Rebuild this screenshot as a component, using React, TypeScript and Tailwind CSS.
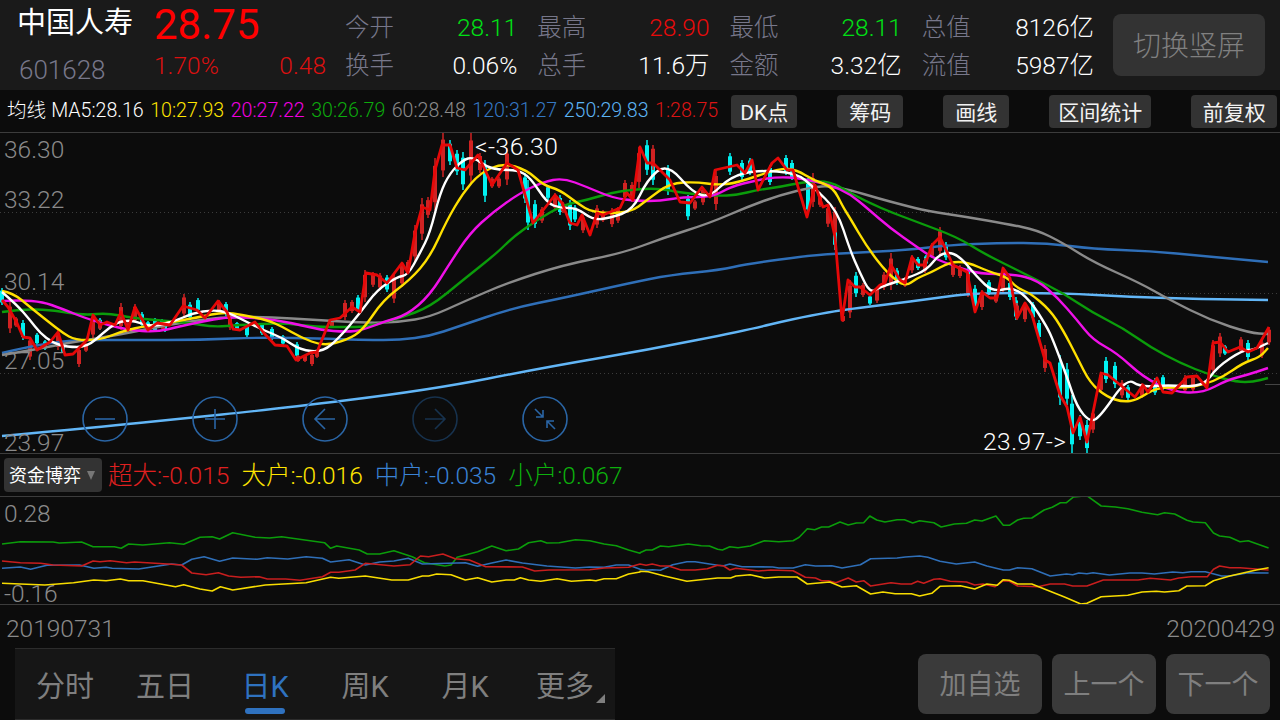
const ma5 = "2,292 17,305 30,320 40,333 53,343 67,347 87,347 103,333 117,322 133,320 150,327 173,322 193,313 213,310 227,312 243,320 263,330 283,338 300,350 323,352 340,337 360,313 377,290 397,277 408,275 420,253 430,233 440,193 450,173 463,160 473,157 487,167 500,170 517,170 530,177 547,203 560,208 577,208 593,220 610,218 633,210 647,180 667,163 693,193 710,197 730,177 757,170 797,173 813,187 837,210 850,250 860,273 870,293 880,287 893,283 907,278 927,270 940,253 957,253 977,277 993,292 1013,287 1030,300 1047,327 1053,340 1067,377 1077,407 1090,422 1100,417 1127,378 1140,387 1167,385 1203,387 1217,367 1243,350 1253,350 1268,343";
const ma10 = "2,291 13,293 30,307 50,323 63,333 75,340 100,340 120,332 140,327 167,323 200,317 223,312 243,315 267,320 283,327 300,337 323,346 347,340 363,330 383,300 410,280 430,257 447,220 463,193 480,173 503,163 527,170 543,185 560,190 577,203 593,213 630,213 647,200 670,183 697,182 717,185 737,183 780,168 797,170 813,180 833,187 843,207 850,218 867,247 887,273 905,287 917,278 930,273 950,262 967,262 990,272 1007,277 1017,288 1030,293 1050,310 1063,330 1077,357 1090,383 1107,397 1123,402 1137,400 1157,387 1183,388 1203,385 1223,377 1243,363 1260,357 1268,348";
const ma20 = "2,301 20,300 43,302 60,308 90,320 127,330 157,332 177,327 200,322 227,317 260,318 293,323 320,330 347,332 363,330 383,322 407,315 430,295 450,263 470,233 493,212 520,193 543,182 563,178 587,187 613,198 637,201 660,201 683,197 713,197 730,187 757,180 777,177 800,178 830,185 850,194 867,208 890,228 917,247 933,258 957,267 980,274 1013,274 1037,280 1057,297 1077,320 1093,340 1117,353 1143,377 1173,392 1203,393 1227,380 1247,375 1268,368";
const ma30 = "2,312 20,309 50,310 70,313 87,315 107,313 133,318 167,321 190,323 213,327 240,325 283,323 317,327 343,327 367,327 400,318 430,307 463,280 497,253 513,237 537,220 563,205 587,200 610,193 630,190 657,188 683,193 717,196 737,195 757,190 780,187 803,182 830,181 850,193 880,208 917,222 957,237 983,253 1007,265 1033,278 1063,293 1093,313 1123,328 1150,347 1180,363 1210,375 1237,382 1253,382 1268,378";
const ma60 = "2,355 33,350 67,343 100,338 133,332 167,325 200,320 227,317 267,317 317,320 367,323 400,322 430,317 463,302 507,283 563,265 623,253 663,238 710,223 747,207 780,195 813,187 830,186 850,190 877,198 903,205 927,211 967,217 1007,224 1037,230 1063,243 1093,262 1140,283 1170,300 1210,320 1250,333 1268,334";
const ma120 = "2,353 23,348 50,343 77,340 133,340 200,340 267,337 367,340 400,340 430,336 457,327 513,308 563,298 630,283 670,275 720,270 747,264 813,255 850,253 907,250 950,245 1000,243 1047,243 1093,249 1150,251 1203,256 1268,262";
const ma250 = "2,436 100,427 177,419 267,410 430,390 547,367 647,350 747,330 793,319 830,312 850,309 883,305 937,298 973,293 1063,293 1130,297 1203,299 1268,300";
const close = "2,300 8,307 17,323 23,337 30,338 37,350 50,342 58,332 65,355 73,354 87,340 93,315 100,325 107,322 115,325 121,312 128,330 135,307 148,330 157,323 170,325 183,306 197,310 205,318 218,301 227,312 233,329 240,330 255,322 263,332 275,345 287,346 296,360 310,353 317,352 330,320 340,318 352,307 360,312 366,273 377,275 387,283 402,263 408,273 415,233 422,207 430,210 435,170 442,145 450,145 457,168 465,170 478,155 492,185 507,163 518,170 533,223 555,195 562,203 570,223 577,225 582,215 590,235 597,213 603,215 620,208 627,193 633,200 640,147 647,163 653,163 660,170 670,180 680,202 690,203 702,187 710,197 715,170 737,165 745,173 752,160 758,190 772,163 778,158 787,170 793,170 807,217 815,185 823,207 828,205 835,237 842,320 848,280 855,287 860,287 870,295 880,285 885,283 891,265 900,280 905,283 912,257 918,265 925,265 932,245 940,237 953,265 967,272 975,312 982,292 990,298 997,298 1003,268 1010,278 1017,318 1025,303 1032,315 1045,360 1050,363 1060,395 1067,407 1073,433 1080,417 1087,442 1101,373 1108,375 1135,397 1143,385 1148,392 1157,378 1163,392 1172,393 1187,377 1197,376 1207,388 1213,343 1220,342 1228,352 1240,347 1248,352 1257,348 1269,327";

// [x, high, low]
const cyanBars = [[2,288,305],[23,320,340],[37,333,345],[45,340,350],[63,345,353],[100,318,330],[142,312,327],[148,321,330],[155,318,332],[162,319,328],[165,322,332],[190,302,320],[198,298,312],[226,302,316],[237,322,330],[247,325,337],[262,323,335],[272,327,340],[283,335,345],[297,342,358],[358,295,312],[387,275,292],[450,140,165],[457,150,175],[463,152,190],[485,160,202],[525,173,203],[528,180,230],[535,200,228],[548,185,200],[560,195,215],[570,200,230],[575,205,222],[647,140,175],[653,150,185],[668,165,195],[688,195,220],[730,153,175],[742,160,180],[750,158,175],[770,165,185],[786,155,175],[792,160,180],[808,178,215],[835,215,250],[856,272,297],[870,295,305],[897,268,285],[918,257,270],[926,255,265],[946,242,260],[968,265,295],[975,285,310],[989,280,295],[1010,280,300],[1016,297,320],[1033,302,320],[1039,320,340],[1060,355,405],[1067,363,405],[1072,395,453],[1080,415,440],[1087,420,453],[1106,357,383],[1115,362,388],[1128,385,400],[1155,378,395],[1163,375,390],[1225,345,355],[1248,340,360]];
const redBars = [[10,302,333],[16,317,327],[30,337,360],[58,330,350],[79,347,367],[86,343,352],[93,315,338],[100,320,330],[121,303,330],[128,322,332],[135,304,323],[148,325,332],[163,322,330],[184,294,317],[219,300,312],[230,312,330],[298,355,362],[305,355,362],[312,353,366],[317,350,358],[332,320,327],[345,300,320],[352,300,313],[365,270,302],[373,272,287],[380,273,290],[394,273,303],[402,262,287],[408,260,273],[415,225,262],[422,198,240],[428,197,218],[435,158,210],[443,133,177],[471,133,183],[480,153,173],[492,177,188],[499,177,188],[507,148,185],[542,207,223],[555,193,210],[563,202,213],[583,215,233],[597,205,228],[603,210,222],[612,208,227],[618,207,223],[625,180,200],[632,182,202],[639,147,188],[653,145,170],[695,200,210],[703,187,205],[716,170,210],[813,173,207],[820,192,207],[828,205,227],[835,207,237],[843,315,322],[850,280,318],[863,283,297],[877,287,303],[884,272,290],[891,253,290],[905,277,287],[912,255,273],[925,258,273],[932,243,258],[940,227,255],[953,263,277],[960,265,278],[968,270,297],[982,290,310],[996,293,303],[1003,267,293],[1017,303,320],[1025,303,322],[1045,345,372],[1093,410,433],[1101,372,393],[1122,380,398],[1142,383,398],[1185,375,393],[1193,375,392],[1213,340,375],[1220,333,357],[1241,337,353],[1262,340,358],[1269,327,345]];

// indicator series, read off the zoomed crops
const left = (s: string) => s.split(" ").map((p) => { const [x, y] = p.split(",").map(Number); return `${(x / 2.45).toFixed(1)},${(450 + y / 3).toFixed(1)}`; }).join(" ");
const right = (s: string) => s.split(" ").map((p) => { const [x, y] = p.split(",").map(Number); return `${(640 + x / 2.45).toFixed(1)},${(450 + y / 3).toFixed(1)}`; }).join(" ");

const flowGreen = left("5,282 50,275 130,276 145,279 200,276 228,290 280,290 297,295 315,282 350,285 415,278 450,283 490,262 520,260 538,267 570,248 625,262 660,264 690,260 795,278 810,295 825,288 880,300 900,312 930,312 965,302 1010,320 1040,338 1090,348 1105,345 1120,322 1170,305 1205,288 1240,302 1270,297 1295,278 1325,272 1340,279 1370,278 1410,269 1445,272 1480,282 1510,287 1540,300 1568,310") + " " + right("0,308 15,300 30,300 50,288 70,290 118,282 150,287 170,288 190,298 202,300 220,290 240,293 270,288 305,272 340,275 375,272 390,262 410,236 428,239 445,231 462,231 490,216 510,225 530,219 548,218 563,198 580,210 600,216 630,209 648,209 668,219 685,212 720,218 738,231 770,222 800,220 820,210 838,213 872,198 890,226 905,226 925,210 940,205 960,204 990,180 1010,172 1030,158 1045,158 1062,141 1095,137 1130,168 1165,171 1195,176 1230,187 1268,194 1285,188 1310,192 1340,211 1355,216 1385,218 1405,249 1420,258 1445,262 1470,275 1490,272 1540,294");
const flowRed = left("5,333 50,338 100,340 130,345 200,348 228,333 245,335 270,332 310,338 330,336 420,343 445,345 470,369 505,374 535,368 560,378 590,382 635,380 655,387 700,387 735,391 790,380 810,367 830,367 870,360 895,340 965,348 1005,344 1030,318 1050,320 1085,312 1115,326 1150,330 1190,350 1280,351 1310,363 1345,360 1445,359 1480,354 1540,352 1568,342") + " " + right("0,342 15,346 30,342 50,348 70,348 100,360 135,360 165,356 190,346 205,348 220,360 235,355 290,363 320,360 375,362 405,382 430,384 445,392 462,392 480,398 510,384 530,396 548,392 565,408 615,398 640,402 665,402 680,394 695,400 720,388 735,386 760,394 800,396 820,405 840,402 870,410 890,392 905,394 925,408 975,410 1005,402 1040,402 1060,408 1095,408 1135,390 1220,390 1250,385 1300,390 1320,384 1350,380 1390,380 1405,358 1420,348 1445,353 1470,353 1540,360");
const flowYellow = left("5,400 50,402 110,405 180,398 230,390 260,392 295,387 315,392 350,392 430,410 450,404 490,417 520,423 540,410 570,420 650,405 750,398 810,382 830,385 895,378 960,390 1000,390 1035,378 1050,378 1070,372 1105,374 1140,390 1170,383 1205,396 1240,390 1260,390 1275,383 1295,390 1325,394 1365,386 1400,394 1445,390 1460,392 1480,386 1510,386 1540,372 1568,366") + " " + right("0,364 20,365 60,378 115,394 160,388 190,384 222,384 235,378 270,374 305,384 340,381 385,381 410,402 465,396 495,411 530,407 565,432 595,426 625,431 665,431 685,438 715,430 735,409 785,407 820,417 850,402 875,406 890,389 905,391 925,402 960,402 1040,441 1080,462 1095,460 1130,440 1195,436 1230,426 1265,424 1285,426 1320,422 1340,408 1385,407 1405,392 1445,378 1480,368 1510,360 1540,353");
const flowBlue = left("5,355 50,351 75,358 115,346 195,345 230,355 260,352 275,355 340,357 420,342 445,345 470,328 500,320 538,334 570,324 630,328 655,323 705,327 750,320 790,325 810,336 855,329 895,345 930,336 965,333 1000,325 1035,342 1140,338 1170,349 1205,339 1240,330 1280,339 1340,348 1410,354 1445,351 1480,352 1510,345 1540,345 1568,358") + " " + right("0,358 15,361 30,359 50,361 80,344 115,335 135,335 190,346 205,347 220,342 250,350 325,351 340,354 375,354 405,344 430,348 470,347 495,354 540,344 565,326 630,324 650,321 685,318 705,322 735,334 775,342 820,336 850,348 890,360 905,360 925,353 960,356 1005,378 1045,372 1060,374 1075,369 1095,371 1110,368 1150,375 1200,369 1230,369 1260,372 1305,366 1330,368 1350,365 1385,365 1425,378 1445,378 1490,368 1540,369");

// rounds the corners of a traced line through the midpoints
const smooth = (s: string) => {
  const pts = s.split(" ").map((p) => p.split(",").map(Number));
  let d = `M${pts[0][0]} ${pts[0][1]}`;
  for (let i = 1; i < pts.length - 1; i++) {
    const mx = (pts[i][0] + pts[i + 1][0]) / 2;
    const my = (pts[i][1] + pts[i + 1][1]) / 2;
    d += `Q${pts[i][0]} ${pts[i][1]} ${mx} ${my}`;
  }
  const last = pts[pts.length - 1];
  return `${d}L${last[0]} ${last[1]}`;
};

const stats = [
  { label: "今开", value: "28.11", color: "text-[#00e015]" },
  { label: "最高", value: "28.90", color: "text-[#e80a0a]" },
  { label: "最低", value: "28.11", color: "text-[#00e015]" },
  { label: "总值", value: "8126亿", color: "text-white" },
  { label: "换手", value: "0.06%", color: "text-white" },
  { label: "总手", value: "11.6万", color: "text-white" },
  { label: "金额", value: "3.32亿", color: "text-white" },
  { label: "流值", value: "5987亿", color: "text-white" },
];

const maValues = [
  { text: "MA5:28.16", color: "text-white" },
  { text: "10:27.93", color: "text-[#ffe400]" },
  { text: "20:27.22", color: "text-[#f000e0]" },
  { text: "30:26.79", color: "text-[#0daa0d]" },
  { text: "60:28.48", color: "text-[#8a8a8a]" },
  { text: "120:31.27", color: "text-[#3578c4]" },
  { text: "250:29.83", color: "text-[#5cb4f5]" },
  { text: "1:28.75", color: "text-[#dc1414]" },
];

const tools = [
  { text: "DK点", cls: "w-[66px] mr-[40px]" },
  { text: "筹码", cls: "w-[66px] mr-[40px]" },
  { text: "画线", cls: "w-[66px] mr-[40px]" },
  { text: "区间统计", cls: "w-[102px] mr-[40px]" },
  { text: "前复权", cls: "w-[86px]" },
];

const tabs = ["分时", "五日", "日K", "周K", "月K", "更多"];

function Candles() {
  return (
    <>
      {cyanBars.map(([x, hi, lo]) => (
        <g key={`c${x}`} fill="#00f2f2">
          <rect x={x - 0.75} y={hi} width={1.5} height={lo - hi} />
          <rect x={x - 2} y={hi + (lo - hi) * 0.15} width={4} height={(lo - hi) * 0.7} />
        </g>
      ))}
      {redBars.map(([x, hi, lo]) => (
        <g key={`r${x}`} fill="#d02222">
          <rect x={x - 0.75} y={hi} width={1.5} height={lo - hi} />
          <rect x={x - 2} y={hi + (lo - hi) * 0.15} width={4} height={(lo - hi) * 0.7} />
        </g>
      ))}
    </>
  );
}

function PriceLines() {
  const lines = [
    [ma250, "#62b6f7"],
    [ma120, "#2f6fb8"],
    [ma60, "#8a8a8a"],
    [ma30, "#0b9c0b"],
    [ma20, "#f010e8"],
    [ma10, "#ffe000"],
    [ma5, "#ffffff"],
  ];
  return (
    <svg className="absolute inset-0" width="1280" height="320" viewBox="0 133 1280 320" fill="none">
      {[212.5, 293.5, 373.5].map((y) => (
        <line key={y} x1="0" x2="1280" y1={y} y2={y} stroke="#3c3c3c" strokeDasharray="1 3" />
      ))}
      <line x1="1265" x2="1280" y1="384.5" y2="384.5" stroke="#444" />
      <Candles />
      {lines.map(([points, color]) => (
        <path key={color} d={smooth(points)} stroke={color} strokeWidth="2.4" strokeLinejoin="round" />
      ))}
      <polyline points={close} stroke="#e60808" strokeWidth="2.8" strokeLinejoin="round" />
    </svg>
  );
}

function RoundButton({ dim, children }: { dim?: boolean; children: React.ReactNode }) {
  return (
    <svg width="46" height="46" viewBox="0 0 46 46" fill="none" stroke={dim ? "#17324e" : "#2a65a5"} strokeWidth="1.6">
      <circle cx="23" cy="23" r="22" />
      {children}
    </svg>
  );
}

export default function App() {
  return (
    <div className="w-[1280px] h-[720px] overflow-hidden flex flex-col bg-[#0c0c0c] font-light font-['Roboto','Noto_Sans_CJK_SC',sans-serif]">
      {/* quote header */}
      <div className="h-[90px] shrink-0 flex bg-[#1a1a1a]">
        <div className="w-[154px] pl-[17px] shrink-0">
          <div className="text-[29px] leading-[34px] mt-[6px] font-normal text-white">中国人寿</div>
          <div className="text-[26px] leading-[30px] mt-[15px] ml-[2px] text-[#77778a]">601628</div>
        </div>
        <div className="w-[172px] shrink-0">
          <div className="text-[42px] leading-[50px] font-normal text-[#ff0000]">28.75</div>
          <div className="flex justify-between text-[24.5px] leading-[28px] mt-[2px] text-[#dc1010]">
            <span>1.70%</span>
            <span>0.48</span>
          </div>
        </div>
        <div className="ml-[19px] w-[749px] shrink-0 grid grid-cols-4 gap-x-[20px] content-start pt-[14px] gap-y-[10px] text-[24.5px] leading-[28px]">
          {stats.map((s) => (
            <div key={s.label} className="flex justify-between">
              <span className="text-[#77778a]">{s.label}</span>
              <span className={s.color}>{s.value}</span>
            </div>
          ))}
        </div>
        <button className="ml-[19px] mt-[14px] w-[152px] h-[62px] pt-[3px] rounded-[8px] bg-[#333333] text-[#808080] text-[28px]">切换竖屏</button>
      </div>

      {/* moving averages + tools */}
      <div className="h-[43px] shrink-0 flex items-center pl-[7px] text-[19.6px] border-b border-[#3c3c3c]">
        <span className="text-white mr-[5px]">均线</span>
        <div className="w-[680px] flex gap-[6.5px]">
          {maValues.map((m) => (
            <span key={m.text} className={m.color}>{m.text}</span>
          ))}
        </div>
        <div className="flex">
          {tools.map((t) => (
            <button key={t.text} className={`${t.cls} h-[33px] pt-[2px] rounded-[4px] bg-[#333333] font-normal text-[#f2f2f2] text-[21px] leading-[33px]`}>{t.text}</button>
          ))}
        </div>
      </div>

      {/* price chart */}
      <div className="relative h-[321px] shrink-0 border-b border-[#3c3c3c]">
        <PriceLines />
        <div className="absolute left-[4px] top-[3px] text-[24.5px] leading-[28px] text-[#8a8a8a]">36.30</div>
        <div className="absolute left-[4px] top-[53px] text-[24.5px] leading-[28px] text-[#8a8a8a]">33.22</div>
        <div className="absolute left-[4px] top-[135px] text-[24.5px] leading-[28px] text-[#8a8a8a]">30.14</div>
        <div className="absolute left-[4px] top-[214px] text-[24.5px] leading-[28px] text-[#8a8a8a]">27.05</div>
        <div className="absolute left-[4px] top-[296px] text-[24.5px] leading-[28px] text-[#8a8a8a]">23.97</div>
        <div className="absolute left-[475px] top-0 text-[24.5px] leading-[28px] tracking-[0.5px] text-white">&lt;-36.30</div>
        <div className="absolute left-[983px] top-[295px] text-[24.5px] leading-[28px] tracking-[0.5px] text-white">23.97-&gt;</div>
        <div className="absolute left-[82px] top-[263px] flex gap-[64px]">
          <RoundButton>
            <path d="M13 23h20" />
          </RoundButton>
          <RoundButton>
            <path d="M13 23h20M23 13v20" />
          </RoundButton>
          <RoundButton>
            <path d="M33 23H13M23 13 13 23l10 10" />
          </RoundButton>
          <RoundButton dim>
            <path d="M13 23h20M23 13l10 10-10 10" />
          </RoundButton>
          <RoundButton>
            <path d="M13 13l8 8M21 14v7h-7M33 33l-8-8M25 32v-7h7" />
          </RoundButton>
        </div>
      </div>

      {/* fund flow legend */}
      <div className="h-[43px] shrink-0 flex items-center pl-[4px] text-[24.5px] border-b border-[#3c3c3c]">
        <div className="w-[98px] h-[34px] mr-[6px] rounded-[4px] bg-[#333333] flex items-center pl-[5px] gap-[6px] font-normal text-[18px] text-white">
          <span className="pt-[1px]">资金博弈</span>
          <span className="w-0 h-0 border-x-[4px] border-x-transparent border-t-[9px] border-t-[#777777]" />
        </div>
        <div className="flex gap-[12px] pt-[3px]">
          <span className="text-[#e02020]">超大:-0.015</span>
          <span className="text-[#ffe400]">大户:-0.016</span>
          <span className="text-[#3a82d4]">中户:-0.035</span>
          <span className="text-[#0db00d]">小户:0.067</span>
        </div>
      </div>

      {/* fund flow chart */}
      <div className="relative h-[108px] shrink-0 border-b border-[#3c3c3c]">
        <svg className="absolute inset-0" width="1280" height="107" viewBox="0 497 1280 107" fill="none" strokeWidth="1.6" strokeLinejoin="round">
          <polyline points={flowGreen} stroke="#0b9c0b" />
          <polyline points={flowBlue} stroke="#2f6fb8" />
          <polyline points={flowRed} stroke="#c81e1e" />
          <polyline points={flowYellow} stroke="#f7dc00" />
        </svg>
        <div className="absolute left-[4px] top-[3px] text-[24.5px] leading-[28px] text-[#8a8a8a]">0.28</div>
        <div className="absolute left-[4px] top-[83px] text-[24.5px] leading-[28px] text-[#8a8a8a]">-0.16</div>
      </div>

      {/* date range */}
      <div className="h-[43px] shrink-0 flex items-center justify-between pl-[6px] pr-[5px] pt-[5px] text-[24.5px] text-[#8a8a8a]">
        <span>20190731</span>
        <span>20200429</span>
      </div>

      {/* period tabs + actions */}
      <div className="flex-1 flex pl-[15px]">
        <div className="relative w-[600px] h-[72px] grid grid-cols-6 bg-[#161616] border-y border-[#2c2c2c]">
          {tabs.map((tab) => (
            <div key={tab} className={`relative flex justify-center pt-[21px] font-normal text-[29px] leading-[34px] ${tab === "日K" ? "text-[#2f72c0]" : "text-[#7f7f7f]"}`}>
              {tab}
              {tab === "日K" && <span className="absolute left-[30px] top-[59px] w-[40px] h-[6px] rounded-full bg-[#2f72c0]" />}
            </div>
          ))}
          <span className="absolute left-[581px] top-[45px] w-0 h-0 border-l-[9px] border-l-transparent border-b-[9px] border-b-[#7f7f7f]" />
        </div>
        <div className="ml-[303px] mt-[6px] flex gap-[10px]">
          <button className="w-[124px] h-[60px] pt-[2px] rounded-[8px] bg-[#3a3a3a] font-normal text-[#7f7f7f] text-[27px]">加自选</button>
          <button className="w-[104px] h-[60px] pt-[2px] rounded-[8px] bg-[#3a3a3a] font-normal text-[#7f7f7f] text-[27px]">上一个</button>
          <button className="w-[104px] h-[60px] pt-[2px] rounded-[8px] bg-[#3a3a3a] font-normal text-[#7f7f7f] text-[27px]">下一个</button>
        </div>
      </div>
    </div>
  );
}
